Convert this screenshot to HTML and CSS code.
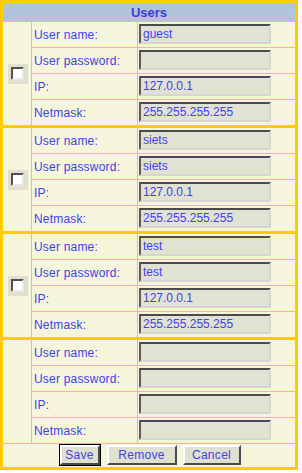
FILE: index.html
```html
<!DOCTYPE html>
<html>
<head>
<meta charset="utf-8">
<link rel="stylesheet" href="styles.css">
</head>
<body>
<div class="panel">
  <div class="title">Users</div>

  <div class="group">
    <div class="sel"><span class="cb"></span></div>
    <div class="lbl">User name:</div><div class="val"><span class="field">guest</span></div>
    <div class="lbl">User password:</div><div class="val"><span class="field"></span></div>
    <div class="lbl">IP:</div><div class="val"><span class="field">127.0.0.1</span></div>
    <div class="lbl">Netmask:</div><div class="val"><span class="field">255.255.255.255</span></div>
  </div>

  <div class="group">
    <div class="sel"><span class="cb"></span></div>
    <div class="lbl">User name:</div><div class="val"><span class="field">siets</span></div>
    <div class="lbl">User password:</div><div class="val"><span class="field">siets</span></div>
    <div class="lbl">IP:</div><div class="val"><span class="field">127.0.0.1</span></div>
    <div class="lbl">Netmask:</div><div class="val"><span class="field">255.255.255.255</span></div>
  </div>

  <div class="group">
    <div class="sel"><span class="cb"></span></div>
    <div class="lbl">User name:</div><div class="val"><span class="field">test</span></div>
    <div class="lbl">User password:</div><div class="val"><span class="field">test</span></div>
    <div class="lbl">IP:</div><div class="val"><span class="field">127.0.0.1</span></div>
    <div class="lbl">Netmask:</div><div class="val"><span class="field">255.255.255.255</span></div>
  </div>

  <div class="group">
    <div class="sel"></div>
    <div class="lbl">User name:</div><div class="val"><span class="field"></span></div>
    <div class="lbl">User password:</div><div class="val"><span class="field"></span></div>
    <div class="lbl">IP:</div><div class="val"><span class="field"></span></div>
    <div class="lbl">Netmask:</div><div class="val"><span class="field"></span></div>
  </div>

  <div class="actions">
    <span class="btn btn-save">Save</span>
    <span class="btn btn-remove">Remove</span>
    <span class="btn btn-cancel">Cancel</span>
  </div>
</div>
</body>
</html>
```

FILE: styles.css
```css
html, body {
  margin: 0;
  padding: 0;
  background: #ffffff;
}

body {
  font-family: "Liberation Sans", Arial, sans-serif;
  font-size: 12px;
  color: #4040ee;
}

.panel {
  width: 292px;
  border: 3px solid #ffcc00;
  background: #ffcc00;
  display: flex;
  flex-direction: column;
}

.title {
  height: 18px;
  line-height: 19px;
  background: #b0c4de;
  text-align: center;
  font-weight: bold;
  font-size: 13px;
  color: #3b3bdc;
  margin-bottom: 1px;
}

.group {
  display: grid;
  grid-template-columns: 28px 105px 157px;
  grid-auto-rows: 25px;
  gap: 1px;
}

.group + .group {
  margin-top: 3px;
}

.sel {
  grid-row: span 4;
  background: #f5f5dc;
  display: flex;
  align-items: center;
  justify-content: center;
  padding-left: 1px;
}

.cb {
  width: 20px;
  height: 20px;
  background: #e0e0d0;
  display: flex;
  align-items: center;
  justify-content: center;
}

.cb::before {
  content: "";
  width: 9px;
  height: 9px;
  background: #ffffff;
  border-style: solid;
  border-width: 2px;
  border-color: #505050 #e8e8e8 #e8e8e8 #505050;
}

.lbl {
  background: #f5f5dc;
  padding-left: 2px;
  display: flex;
  align-items: center;
  letter-spacing: 0.2px;
}

.val {
  background: #f5f5dc;
  padding-left: 1px;
  display: flex;
  align-items: center;
}

.field {
  box-sizing: border-box;
  width: 132px;
  height: 20px;
  margin-top: -1px;
  background: #e2e2d2;
  border-style: solid;
  border-width: 2px;
  border-color: #4a4a4a #d6d6d0 #d6d6d0 #5a5a5a;
  padding: 0 0 0 2px;
  line-height: 16px;
  white-space: nowrap;
  overflow: hidden;
}

.actions {
  margin-top: 1px;
  height: 23px;
  background: #f5f5dc;
  display: flex;
  justify-content: center;
  align-items: flex-start;
  padding-top: 1px;
  box-sizing: border-box;
  gap: 6px;
  padding-left: 2px;
}

.btn {
  box-sizing: border-box;
  height: 20px;
  line-height: 16px;
  background: #e0e0d0;
  border-style: solid;
  border-width: 2px;
  border-color: #ffffff #4a4a4a #4a4a4a #ffffff;
  text-align: center;
  font-size: 12px;
  letter-spacing: 0.3px;
  color: #4040ee;
}

.btn-save {
  width: 40px;
  outline: 1px solid #000000;
  margin-right: 1px;
}

.btn-remove {
  width: 70px;
}

.btn-cancel {
  width: 58px;
}
```
